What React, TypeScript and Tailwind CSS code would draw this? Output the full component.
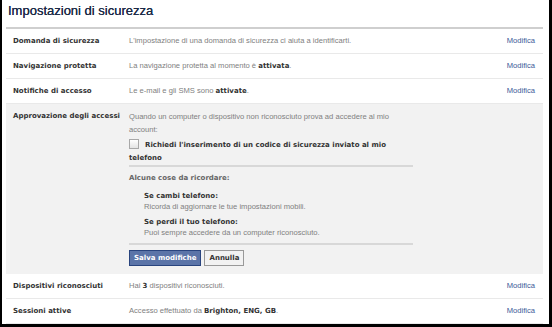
import React from "react";

const REG = "font-['Liberation_Sans',Arial,sans-serif] text-[7.6px] text-[#808080]";
const BOLD = "font-['DejaVu_Sans',Verdana,sans-serif] text-[7px] font-bold";

function Row({ label, children }: { label: string; children: React.ReactNode }) {
  return (
    <div className="flex h-[25px] items-center border-b border-[#e9e9e9]">
      <div className={`w-[123px] shrink-0 pl-[7px] text-[#333] ${BOLD}`}>{label}</div>
      <div className={`flex-1 ${REG}`}>{children}</div>
      <div className="pr-[8px] font-['Liberation_Sans',Arial,sans-serif] text-[7.6px] text-[#3b5998]">Modifica</div>
    </div>
  );
}

function Strong({ children }: { children: React.ReactNode }) {
  return <span className={`text-[#333] ${BOLD}`}>{children}</span>;
}

export default function App() {
  return (
    <div className="box-border h-[327px] w-[552px] overflow-hidden border-b-[3px] border-l-2 border-r-[3px] border-black bg-white">
      <div className="pl-[4px] pr-[6px]">
        <div className="h-[27px] pl-[2px] pt-[3px] font-['Liberation_Sans',Arial,sans-serif] text-[13px] leading-[16px] text-[#1c2a47] [text-shadow:0_0_0.6px_#1c2a47]">
          Impostazioni di sicurezza
        </div>
        <div className="h-[2px] bg-[#cfcfcf]" />
        <Row label="Domanda di sicurezza">L'impostazione di una domanda di sicurezza ci aiuta a identificarti.</Row>
        <Row label="Navigazione protetta">
          La navigazione protetta al momento è <Strong>attivata</Strong>.
        </Row>
        <Row label="Notifiche di accesso">
          Le e-mail e gli SMS sono <Strong>attivate</Strong>.
        </Row>
        <div className="flex h-[170px] bg-[#f2f2f2] pt-[6px]">
          <div className={`w-[123px] shrink-0 pl-[7px] leading-[13px] text-[#333] ${BOLD}`}>
            Approvazione degli accessi
          </div>
          <div className="w-[284px]">
            <div className={`leading-[13px] ${REG}`}>
              Quando un computer o dispositivo non riconosciuto prova ad accedere al mio account:
            </div>
            <div className={`mt-[1px] leading-[13px] text-[#333] ${BOLD}`}>
              <span className="mr-[6px] inline-block h-[10px] w-[10px] translate-y-[2px] border border-[#a8a8a8] bg-gradient-to-b from-[#fff] to-[#e4e4e4] align-baseline" />
              Richiedi l'inserimento di un codice di sicurezza inviato al mio telefono
            </div>
            <div className="h-[2px] bg-[#d8d8d8]" />
            <div className={`mt-[5px] leading-[13px] text-[#666] ${BOLD}`}>Alcune cose da ricordare:</div>
            <div className="mt-[6px] pl-[15px]">
              <div className={`leading-[10px] text-[#333] ${BOLD}`}>Se cambi telefono:</div>
              <div className={`leading-[11px] ${REG}`}>Ricorda di aggiornare le tue impostazioni mobili.</div>
              <div className={`mt-[5px] leading-[10px] text-[#333] ${BOLD}`}>Se perdi il tuo telefono:</div>
              <div className={`leading-[11px] ${REG}`}>Puoi sempre accedere da un computer riconosciuto.</div>
            </div>
            <div className="mt-[5px] h-[2px] bg-[#d8d8d8]" />
            <div className="mt-[5px] flex gap-[3px]">
              <button
                className={`h-[16px] border border-[#29447e] bg-[#5b74a8] px-[4px] leading-[14px] text-white ${BOLD}`}
              >
                Salva modifiche
              </button>
              <button className={`h-[16px] border border-[#999] bg-[#f2f2f2] px-[4px] leading-[14px] text-[#333] ${BOLD}`}>
                Annulla
              </button>
            </div>
          </div>
        </div>
        <Row label="Dispositivi riconosciuti">
          Hai <Strong>3</Strong> dispositivi riconosciuti.
        </Row>
        <Row label="Sessioni attive">
          Accesso effettuato da <Strong>Brighton, ENG, GB</Strong>.
        </Row>
      </div>
    </div>
  );
}
